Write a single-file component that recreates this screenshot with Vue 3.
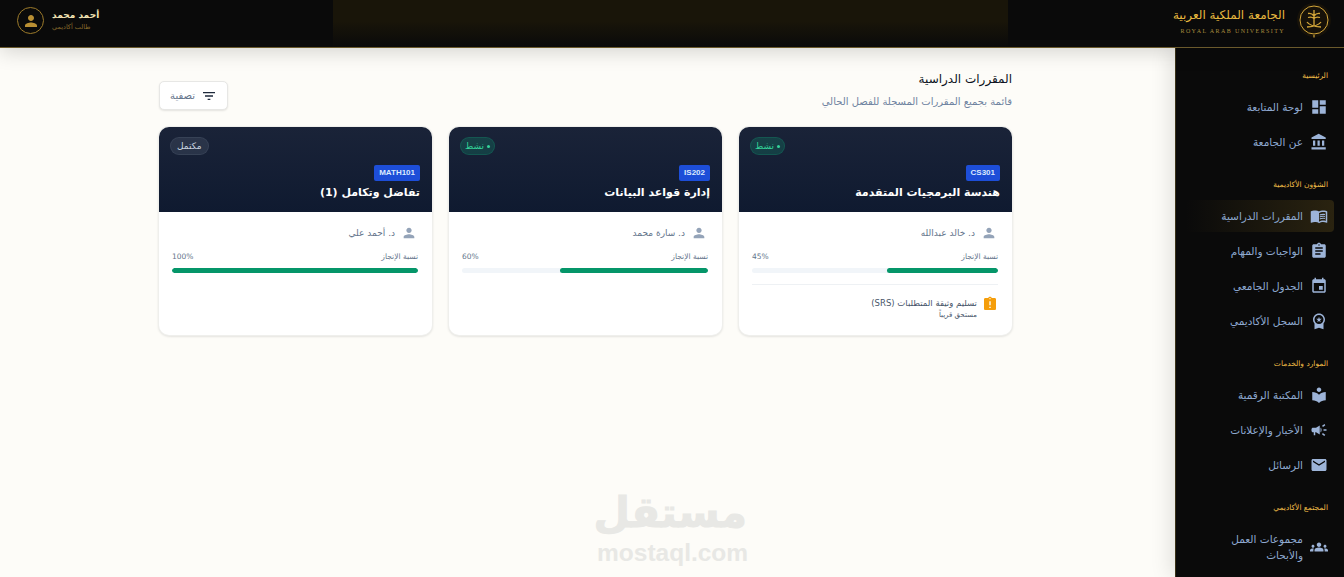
<script setup>
const icons = {
  dashboard: 'M3 13h8V3H3v10zm0 8h8v-6H3v6zm10 0h8V11h-8v10zm0-18v6h8V3h-8z',
  bank: 'M4 10v7h3v-7H4zm6 0v7h3v-7h-3zM2 22h19v-3H2v3zm14-12v7h3v-7h-3zm-4.5-9L2 6v2h19V6l-9.5-5z',
  book: 'M21 5c-1.11-.35-2.33-.5-3.5-.5-1.95 0-4.05.4-5.5 1.5-1.45-1.1-3.55-1.5-5.5-1.5S2.45 4.9 1 6v14.65c0 .25.25.5.5.5.1 0 .15-.05.25-.05C3.1 20.45 5.05 20 6.5 20c1.95 0 4.05.4 5.5 1.5 1.35-.85 3.8-1.5 5.5-1.5 1.65 0 3.35.3 4.75 1.05.1.05.15.05.25.05.25 0 .5-.25.5-.5V6c-.6-.45-1.25-.75-2-1zm0 13.5c-1.1-.35-2.3-.5-3.5-.5-1.7 0-4.15.65-5.5 1.5V8c1.35-.85 3.8-1.5 5.5-1.5 1.2 0 2.4.15 3.5.5v11.5z M17.5 10.5c.88 0 1.73.09 2.5.26V9.24c-.79-.15-1.64-.24-2.5-.24-1.7 0-3.24.29-4.5.83v1.66c1.13-.64 2.7-.99 4.5-.99zM13 12.49v1.66c1.13-.64 2.7-.99 4.5-.99.88 0 1.73.09 2.5.26V11.9c-.79-.15-1.64-.24-2.5-.24-1.7 0-3.24.3-4.5.83zM17.5 14.33c-1.7 0-3.24.29-4.5.83v1.66c1.13-.64 2.7-.99 4.5-.99.88 0 1.73.09 2.5.26v-1.52c-.79-.16-1.64-.24-2.5-.24z',
  clipboard: 'M19 3h-4.18C14.4 1.84 13.3 1 12 1c-1.3 0-2.4.84-2.82 2H5c-1.1 0-2 .9-2 2v14c0 1.1.9 2 2 2h14c1.1 0 2-.9 2-2V5c0-1.1-.9-2-2-2zm-7 0c.55 0 1 .45 1 1s-.45 1-1 1-1-.45-1-1 .45-1 1-1zm2 14H7v-2h7v2zm3-4H7v-2h10v2zm0-4H7V7h10v2z',
  event: 'M17 12h-5v5h5v-5zM16 1v2H8V1H6v2H5c-1.11 0-1.99.9-1.99 2L3 19c0 1.1.89 2 2 2h14c1.1 0 2-.9 2-2V5c0-1.1-.9-2-2-2h-1V1h-2zm3 18H5V8h14v11z',
  premium: 'M9.68 13.69 12 11.93l2.31 1.76-.88-2.85L15.75 9h-2.84L12 6.19 11.09 9H8.25l2.31 1.84-.88 2.85zM20 10c0-4.42-3.58-8-8-8s-8 3.58-8 8c0 2.03.76 3.87 2 5.28V23l6-2 6 2v-7.72c1.24-1.41 2-3.25 2-5.28zm-8-6c3.31 0 6 2.69 6 6s-2.69 6-6 6-6-2.69-6-6 2.69-6 6-6z',
  library: 'M12 11.55C9.64 9.35 6.48 8 3 8v11c3.48 0 6.64 1.35 9 3.55 2.36-2.19 5.52-3.55 9-3.55V8c-3.48 0-6.64 1.35-9 3.55zM12 8c1.66 0 3-1.34 3-3s-1.34-3-3-3-3 1.34-3 3 1.34 3 3 3z',
  campaign: 'M18 11v2h4v-2h-4zm-2 6.61c.96.71 2.21 1.65 3.2 2.39.4-.53.8-1.07 1.2-1.6-.99-.74-2.24-1.68-3.2-2.4-.4.54-.8 1.08-1.2 1.61zM20.4 5.6c-.4-.53-.8-1.07-1.2-1.6-.99.74-2.24 1.68-3.2 2.4.4.53.8 1.07 1.2 1.6.96-.72 2.21-1.65 3.2-2.4zM4 9c-1.1 0-2 .9-2 2v2c0 1.1.9 2 2 2h1v4h2v-4h1l5 3V6L8 9H4zm11.5 3c0-1.33-.58-2.53-1.5-3.35v6.69c.92-.81 1.5-2.01 1.5-3.34z',
  mail: 'M20 4H4c-1.1 0-1.99.9-1.99 2L2 18c0 1.1.9 2 2 2h16c1.1 0 2-.9 2-2V6c0-1.1-.9-2-2-2zm0 4l-8 5-8-5V6l8 5 8-5v2z',
  groups: 'M12 12.75c1.63 0 3.07.39 4.24.9 1.08.48 1.76 1.56 1.76 2.73V18H6v-1.61c0-1.18.68-2.26 1.76-2.73 1.17-.52 2.61-.91 4.24-.91zM4 13c1.1 0 2-.9 2-2s-.9-2-2-2-2 .9-2 2 .9 2 2 2zm1.13 1.1c-.37-.06-.74-.1-1.13-.1-.99 0-1.93.21-2.78.58C.48 14.9 0 15.62 0 16.43V18h4.5v-1.61c0-.83.23-1.61.63-2.29zM20 13c1.1 0 2-.9 2-2s-.9-2-2-2-2 .9-2 2 .9 2 2 2zm4 3.43c0-.81-.48-1.53-1.22-1.85-.85-.37-1.79-.58-2.78-.58-.39 0-.76.04-1.13.1.4.68.63 1.46.63 2.29V18H24v-1.57zM12 6c1.66 0 3 1.34 3 3s-1.34 3-3 3-3-1.34-3-3 1.34-3 3-3z',
  person: 'M12 12c2.21 0 4-1.79 4-4s-1.79-4-4-4-4 1.79-4 4 1.79 4 4 4zm0 2c-2.67 0-8 1.34-8 4v2h16v-2c0-2.66-5.33-4-8-4z',
  filter: 'M10 18h4v-2h-4v2zM3 6v2h18V6H3zm3 7h12v-2H6v2z',
  late: 'M19 3h-4.18C14.4 1.84 13.3 1 12 1c-1.3 0-2.4.84-2.82 2H5c-1.1 0-2 .9-2 2v14c0 1.1.9 2 2 2h14c1.1 0 2-.9 2-2V5c0-1.1-.9-2-2-2zm-6 15h-2v-2h2v2zm0-4h-2V8h2v6zm-1-9c-.55 0-1-.45-1-1s.45-1 1-1 1 .45 1 1-.45 1-1 1z'
}

const nav = [
  {
    title: 'الرئيسية',
    items: [
      { label: 'لوحة المتابعة', icon: 'dashboard' },
      { label: 'عن الجامعة', icon: 'bank' }
    ]
  },
  {
    title: 'الشؤون الأكاديمية',
    items: [
      { label: 'المقررات الدراسية', icon: 'book', active: true },
      { label: 'الواجبات والمهام', icon: 'clipboard' },
      { label: 'الجدول الجامعي', icon: 'event' },
      { label: 'السجل الأكاديمي', icon: 'premium' }
    ]
  },
  {
    title: 'الموارد والخدمات',
    items: [
      { label: 'المكتبة الرقمية', icon: 'library' },
      { label: 'الأخبار والإعلانات', icon: 'campaign' },
      { label: 'الرسائل', icon: 'mail' }
    ]
  },
  {
    title: 'المجتمع الأكاديمي',
    items: [{ label: 'مجموعات العمل والأبحاث', icon: 'groups' }]
  }
]

const courses = [
  { code: 'CS301', name: 'هندسة البرمجيات المتقدمة', teacher: 'د. خالد عبدالله', progress: 45, status: 'نشط', active: true, task: 'تسليم وثيقة المتطلبات (SRS)', due: 'مستحق قريباً' },
  { code: 'IS202', name: 'إدارة قواعد البيانات', teacher: 'د. سارة محمد', progress: 60, status: 'نشط', active: true },
  { code: 'MATH101', name: 'تفاضل وتكامل (1)', teacher: 'د. أحمد علي', progress: 100, status: 'مكتمل', active: false }
]
</script>

<template>
  <div class="app" dir="rtl">
    <header class="topbar">
      <div class="brand">
        <svg class="logo" viewBox="0 0 36 36" fill="none" stroke="#d4a73a">
          <circle cx="18" cy="18" r="17" fill="#1c1608" stroke="none" opacity=".7" />
          <circle cx="18" cy="18" r="14" stroke-width="1" />
          <path d="M18 8v16M12 11.5c2.5-.5 4.5.5 6 2.5 1.5-2 3.5-3 6-2.5M12 15.5c2.5-.8 4.500-.5 6 1 1.500-1.500 3.500-1.800 6-1" stroke-width="1.300" />
          <path d="M11 20c2 3 7 4.500 14 5M25 20c-2 3-7 4.500-14 5" stroke-width="1.300" />
          <path d="M18 33v2.500" stroke-width="1.200" />
        </svg>
        <div class="brand-text">
          <div class="brand-ar">الجامعة الملكية العربية</div>
          <div class="brand-en" dir="ltr">ROYAL ARAB UNIVERSITY</div>
        </div>
      </div>
      <div class="user">
        <div class="user-text">
          <div class="user-name">أحمد محمد</div>
          <div class="user-role">طالب أكاديمي</div>
        </div>
        <div class="avatar">
          <svg viewBox="0 0 24 24"><path :d="icons.person" /></svg>
        </div>
      </div>
    </header>

    <div class="body">
      <aside class="sidebar">
        <section v-for="group in nav" :key="group.title" class="nav-group">
          <h3>{{ group.title }}</h3>
          <a v-for="item in group.items" :key="item.label" class="nav-item" :class="{ active: item.active }">
            <svg viewBox="0 0 24 24"><path :d="icons[item.icon]" /></svg>
            <span>{{ item.label }}</span>
          </a>
        </section>
      </aside>

      <main class="main">
        <div class="page-head">
          <div>
            <h1>المقررات الدراسية</h1>
            <p>قائمة بجميع المقررات المسجلة للفصل الحالي</p>
          </div>
          <button class="filter-btn">
            <svg viewBox="0 0 24 24"><path :d="icons.filter" /></svg>
            <span>تصفية</span>
          </button>
        </div>

        <div class="cards">
          <article v-for="course in courses" :key="course.code" class="card">
            <div class="card-head">
              <span class="status" :class="{ on: course.active }">
                <i v-if="course.active"></i>{{ course.status }}
              </span>
              <span class="code">{{ course.code }}</span>
              <h2>{{ course.name }}</h2>
            </div>
            <div class="card-body">
              <div class="teacher">
                <svg viewBox="0 0 24 24"><path :d="icons.person" /></svg>
                <span>{{ course.teacher }}</span>
              </div>
              <div class="progress-row">
                <span>نسبة الإنجاز</span>
                <span>{{ course.progress }}%</span>
              </div>
              <div class="track">
                <div class="fill" :style="{ width: course.progress + '%' }"></div>
              </div>
              <div v-if="course.task" class="task">
                <svg viewBox="0 0 24 24"><path :d="icons.late" /></svg>
                <div class="task-text">
                  <div class="task-name">{{ course.task }}</div>
                  <div class="task-due">{{ course.due }}</div>
                </div>
              </div>
            </div>
          </article>
        </div>

        <div class="watermark">
          <div class="wm-ar">مستقل</div>
          <div class="wm-en" dir="ltr">mostaql.com</div>
        </div>
      </main>
    </div>
  </div>
</template>

<style>
html, body {
  margin: 0;
  height: 100%;
  overflow: hidden;
}
</style>

<style scoped>
.app {
  width: 1344px;
  height: 577px;
  display: flex;
  flex-direction: column;
  overflow: hidden;
  background: #fdfcf8;
  font-family: "DejaVu Sans", "Noto Sans", sans-serif;
}

.topbar {
  position: relative;
  z-index: 2;
  flex: none;
  height: 47px;
  display: flex;
  align-items: center;
  justify-content: space-between;
  padding: 0 12px 0 17px;
  background: linear-gradient(180deg, #191509 0, #191509 45%, #0a0a0a 100%) 333px 0 / 675px 100% no-repeat, #0a0a0a;
  border-bottom: 1px solid #6b5a2c;
  box-shadow: 0 4px 20px rgba(0, 0, 0, .16);
}

.brand {
  display: flex;
  align-items: center;
  gap: 11px;
  margin-bottom: 7px;
}

.logo {
  width: 36px;
  height: 36px;
}

.brand-ar {
  font-size: 12px;
  line-height: 20px;
  color: #e8b93f;
}

.brand-en {
  font-family: "Liberation Serif", serif;
  font-size: 6px;
  letter-spacing: 1.4px;
  line-height: 9px;
  margin-top: 2px;
  color: #a88a3e;
  text-align: right;
}

.user {
  display: flex;
  align-items: center;
  gap: 8px;
  margin-bottom: 6px;
}

.user-text {
  text-align: left;
}

.user-name {
  font-size: 9px;
  font-weight: 700;
  line-height: 13px;
  color: #f3e3b3;
}

.user-role {
  font-size: 6.5px;
  line-height: 11px;
  color: #86692a;
}

.avatar {
  box-sizing: border-box;
  width: 27px;
  height: 27px;
  border: 1px solid #9c7a2a;
  border-radius: 50%;
  display: flex;
  align-items: center;
  justify-content: center;
}

.avatar svg {
  width: 18px;
  height: 18px;
  fill: #b98f33;
}

.body {
  flex: 1;
  min-height: 0;
  display: flex;
}

.sidebar {
  position: relative;
  z-index: 1;
  flex: none;
  width: 168px;
  background: #0a0a0a;
  border-left: 1px solid #3a3218;
  padding-top: 18px;
  box-shadow: -4px 0 20px rgba(0, 0, 0, .12);
  overflow: hidden;
}

.nav-group {
  margin-bottom: 17px;
}

.nav-group h3 {
  margin: 0 0 5px;
  padding: 0 16px;
  font-size: 7.5px;
  font-weight: 400;
  line-height: 20px;
  color: #f0bd48;
}

.nav-item {
  display: flex;
  align-items: center;
  gap: 7px;
  padding: 8px 6px;
  margin: 0 10px 3px;
  font-size: 10.5px;
  line-height: 16px;
  color: #8ea9d0;
}

.nav-item span {
  max-width: 85px;
}

.nav-item svg {
  flex: none;
  width: 18px;
  height: 18px;
  margin: -1px 0;
  fill: #9db4d8;
}

.nav-item.active {
  border-radius: 4px;
  background: linear-gradient(270deg, #2a2310, rgba(42, 35, 16, 0));
}

.main {
  position: relative;
  flex: 1;
  min-width: 0;
  padding: 20px 163px 0 159px;
}

.page-head {
  display: flex;
  align-items: flex-start;
  justify-content: space-between;
  margin-bottom: 17px;
}

h1 {
  margin: 0;
  font-size: 12px;
  font-weight: 400;
  line-height: 22px;
  color: #0b1220;
}

.page-head p {
  margin: 4px 0 0;
  font-size: 10px;
  line-height: 16px;
  color: #6f83a0;
}

.filter-btn {
  margin-top: 13px;
  width: 69px;
  height: 29px;
  display: flex;
  align-items: center;
  justify-content: center;
  gap: 6px;
  background: #fff;
  border: 1px solid #e7e7e5;
  border-radius: 5px;
  box-shadow: 0 1px 2px rgba(0, 0, 0, .1);
  font-family: inherit;
  font-size: 10px;
  color: #64748b;
  padding: 0;
}

.filter-btn svg {
  width: 16px;
  height: 16px;
  fill: #1e293b;
}

.cards {
  display: grid;
  grid-template-columns: repeat(3, 273px);
  gap: 17px;
}

.card {
  height: 208px;
  background: #fff;
  border-radius: 10px;
  overflow: hidden;
  box-shadow: 0 0 0 1px #efefec, 0 1px 3px rgba(0, 0, 0, .2);
}

.card-head {
  position: relative;
  height: 85px;
  box-sizing: border-box;
  padding: 38px 12px 0;
  background: linear-gradient(180deg, #1a2338, #0f1a30);
}

.status {
  position: absolute;
  top: 10px;
  left: 11px;
  height: 18px;
  padding: 0 6px;
  display: flex;
  align-items: center;
  gap: 3px;
  border-radius: 9px;
  font-size: 9px;
  background: rgba(148, 163, 184, .15);
  border: 1px solid rgba(148, 163, 184, .12);
  box-sizing: border-box;
  color: #cbd5e1;
}

.status.on {
  padding: 0 4px;
  background: rgba(16, 185, 129, .2);
  border-color: rgba(16, 185, 129, .2);
  color: #34d399;
}

.status i {
  width: 3px;
  height: 3px;
  border-radius: 50%;
  background: #34d399;
}

.code {
  display: block;
  width: fit-content;
  height: 16px;
  line-height: 16px;
  padding: 0 5px;
  border-radius: 2px;
  background: #1d4ed8;
  color: #dbeafe;
  font-family: "Liberation Sans", sans-serif;
  font-size: 8px;
  font-weight: 700;
}

.card-head h2 {
  margin: 2px 0 0;
  font-size: 11px;
  font-weight: 700;
  line-height: 20px;
  color: #fff;
}

.card-body {
  padding: 12px 14px 0 13px;
}

.teacher {
  display: flex;
  align-items: center;
  gap: 6px;
  height: 18px;
  padding-right: 1px;
  font-size: 9px;
  color: #64748b;
}

.teacher svg {
  width: 16px;
  height: 16px;
  fill: #94a3b8;
}

.progress-row {
  display: flex;
  justify-content: space-between;
  margin-top: 9px;
  font-size: 7.5px;
  line-height: 12px;
  color: #64748b;
}

.track {
  height: 5px;
  margin-top: 5px;
  border-radius: 3px;
  background: #f1f5f9;
  overflow: hidden;
}

.fill {
  height: 100%;
  border-radius: 3px;
  background: #059669;
}

.task {
  display: flex;
  align-items: flex-start;
  gap: 5px;
  margin-top: 11px;
  padding-top: 11px;
  border-top: 1px solid #eef1f4;
}

.task svg {
  flex: none;
  width: 16px;
  height: 16px;
  fill: #f59e0b;
}

.task-text {
  padding-top: 1px;
}

.task-name {
  font-size: 8.5px;
  line-height: 12px;
  color: #475569;
}

.task-due {
  font-size: 7px;
  line-height: 12px;
  color: #475569;
}

.watermark {
  position: absolute;
  left: 597px;
  top: 438px;
  width: 150px;
  text-align: center;
  color: #e8e8e5;
  pointer-events: none;
}

.wm-ar {
  font-size: 42px;
  font-weight: 700;
  line-height: 54px;
  -webkit-text-stroke: 1px #e8e8e5;
}

.wm-en {
  font-family: "Liberation Sans", sans-serif;
  font-size: 24.5px;
  font-weight: 700;
  line-height: 26px;
}
</style>
